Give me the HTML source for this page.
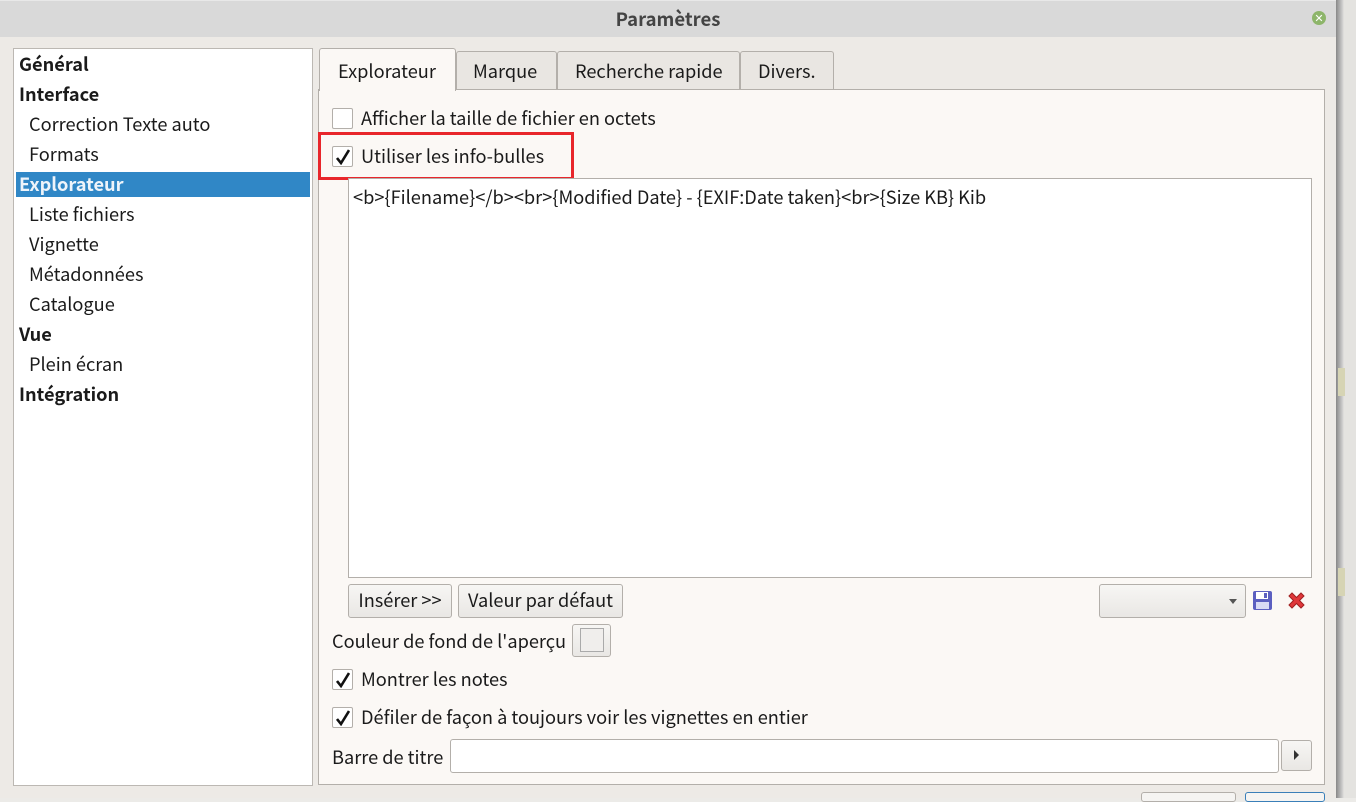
<!DOCTYPE html>
<html><head><meta charset="utf-8"><style>
*{box-sizing:border-box;margin:0;padding:0}
body{width:1356px;height:798px;overflow:hidden;background:#ecebe8;font-family:"Noto Sans CJK JP","DejaVu Sans",sans-serif;font-size:18.2px;color:#1a1a1a;position:relative}
.abs{position:absolute}
.t{position:absolute;white-space:nowrap;line-height:20px}
.cb{position:absolute;width:21px;height:21px;border:1px solid #b3afaa;background:#fff;border-radius:2px}
.cb svg{position:absolute;left:3px;top:2px}
.btn{position:absolute;border:1px solid #b3afaa;border-radius:3px;background:linear-gradient(#f7f6f4,#e9e7e4);text-align:center;line-height:30px}
</style></head><body>
<div class="abs" style="left:1336px;top:0;width:20px;height:798px;background:linear-gradient(90deg,#888,#c8c8c8 6px,#e4e3e0 8px)"></div>
<div class="abs" style="left:1338px;top:368px;width:7px;height:28px;background:#d6d4b4"></div>
<div class="abs" style="left:1338px;top:568px;width:7px;height:28px;background:#d6d4b4"></div>
<div class="abs" style="left:0;top:0;width:1336px;height:798px;background:#edeae6"></div>
<div class="abs" style="left:0;top:0;width:1336px;height:37px;background:#d9d9d9;border-top:1px solid #e8e8e8"></div>
<div class="t" style="left:0;width:1336px;top:9px;text-align:center;font-weight:bold;color:#444;font-size:18.5px">Paramètres</div>
<div class="abs" style="left:1312px;top:11px;width:14px;height:14px;border-radius:50%;background:#8db56a;color:#fff;font-size:11px;line-height:14px;text-align:center;font-weight:bold">✕</div>
<div class="abs" style="left:13px;top:48px;width:300px;height:738px;background:#fff;border:1px solid #bcb8b3"></div>
<div class="abs" style="left:16px;top:172px;width:294px;height:25px;background:#3087c6"></div>
<div class="t" style="left:19px;top:54px;font-weight:bold">Général</div>
<div class="t" style="left:19px;top:84px;font-weight:bold">Interface</div>
<div class="t" style="left:29px;top:114px">Correction Texte auto</div>
<div class="t" style="left:29px;top:144px">Formats</div>
<div class="t" style="left:19px;top:174px;font-weight:bold;color:#eef4fa">Explorateur</div>
<div class="t" style="left:29px;top:204px">Liste fichiers</div>
<div class="t" style="left:29px;top:234px">Vignette</div>
<div class="t" style="left:29px;top:264px">Métadonnées</div>
<div class="t" style="left:29px;top:294px">Catalogue</div>
<div class="t" style="left:19px;top:324px;font-weight:bold">Vue</div>
<div class="t" style="left:29px;top:354px">Plein écran</div>
<div class="t" style="left:19px;top:384px;font-weight:bold">Intégration</div>
<div class="abs" style="left:318px;top:89px;width:1007px;height:696px;background:#fbf8f5;border:1px solid #b3afaa"></div>
<div class="abs" style="left:456px;top:51px;width:101px;height:38px;border:1px solid #b3afaa;border-bottom:none;background:#e9e6e2;border-radius:3px 3px 0 0"></div>
<div class="abs" style="left:557px;top:51px;width:183px;height:38px;border:1px solid #b3afaa;border-bottom:none;background:#e9e6e2;border-radius:3px 3px 0 0"></div>
<div class="abs" style="left:740px;top:51px;width:94px;height:38px;border:1px solid #b3afaa;border-bottom:none;background:#e9e6e2;border-radius:3px 3px 0 0"></div>
<div class="abs" style="left:319px;top:48px;width:137px;height:43px;border:1px solid #b3afaa;border-bottom:none;background:#fbf8f5;border-radius:3px 3px 0 0"></div>
<div class="t" style="left:338px;top:61px">Explorateur</div>
<div class="t" style="left:473px;top:61px">Marque</div>
<div class="t" style="left:575px;top:61px">Recherche rapide</div>
<div class="t" style="left:758px;top:61px">Divers.</div>
<div class="cb" style="left:332px;top:108px"></div>
<div class="t" style="left:361px;top:108px">Afficher la taille de fichier en octets</div>
<div class="abs" style="left:318px;top:132px;width:256px;height:48px;border:3px solid #e8262b"></div>
<div class="cb" style="left:332px;top:146px"><svg width="14" height="16" viewBox="0 0 14 16"><path d="M1 9L5 14L13 1" fill="none" stroke="#111" stroke-width="2.6"/></svg></div>
<div class="t" style="left:361px;top:146px">Utiliser les info-bulles</div>
<div class="abs" style="left:348px;top:178px;width:964px;height:400px;background:#fff;border:1px solid #b3afaa"></div>
<div class="t" style="left:353px;top:187px">&lt;b&gt;{Filename}&lt;/b&gt;&lt;br&gt;{Modified Date} - {EXIF:Date taken}&lt;br&gt;{Size KB} Kib</div>
<div class="btn" style="left:348px;top:584px;width:104px;height:34px">Insérer &gt;&gt;</div>
<div class="btn" style="left:458px;top:584px;width:165px;height:34px">Valeur par défaut</div>
<div class="btn" style="left:1099px;top:584px;width:147px;height:34px"></div>
<div class="abs" style="left:1229px;top:599px;border:4px solid transparent;border-top:5px solid #555"></div>
<svg class="abs" style="left:1252px;top:590px" width="21" height="21" viewBox="0 0 21 21"><rect x="1" y="1" width="19" height="19" rx="2" fill="#5b5fc0"/><rect x="4" y="2" width="12" height="7" fill="#fff"/><rect x="12" y="3" width="3" height="5" fill="#5b5fc0"/><rect x="4" y="12" width="13" height="7" fill="#d8daf4"/></svg>
<svg class="abs" style="left:1286px;top:590px" width="21" height="21" viewBox="0 0 21 21"><path d="M3 6L6 3L10.5 7.5L15 3L18 6L13.5 10.5L18 15L15 18L10.5 13.5L6 18L3 15L7.5 10.5Z" fill="#e0383b" stroke="#a02020" stroke-width="1"/></svg>
<div class="t" style="left:332px;top:631px">Couleur de fond de l'aperçu</div>
<div class="btn" style="left:572px;top:624px;width:39px;height:33px"></div>
<div class="abs" style="left:580px;top:628px;width:24px;height:24px;border:1px solid #aaa;background:#f0eeec"></div>
<div class="cb" style="left:332px;top:669px"><svg width="14" height="16" viewBox="0 0 14 16"><path d="M1 9L5 14L13 1" fill="none" stroke="#111" stroke-width="2.6"/></svg></div>
<div class="t" style="left:361px;top:669px">Montrer les notes</div>
<div class="cb" style="left:332px;top:707px"><svg width="14" height="16" viewBox="0 0 14 16"><path d="M1 9L5 14L13 1" fill="none" stroke="#111" stroke-width="2.6"/></svg></div>
<div class="t" style="left:361px;top:707px">Défiler de façon à toujours voir les vignettes en entier</div>
<div class="t" style="left:332px;top:747px">Barre de titre</div>
<div class="abs" style="left:450px;top:739px;width:829px;height:34px;background:#fff;border:1px solid #b3afaa;border-radius:3px"></div>
<div class="btn" style="left:1281px;top:740px;width:31px;height:31px"></div>
<div class="abs" style="left:1294px;top:750px;border:5px solid transparent;border-left:5px solid #333;border-right:none"></div>
<div class="abs" style="left:1141px;top:792px;width:95px;height:10px;border:1px solid #b3afaa;border-radius:3px;background:#f5f4f2"></div>
<div class="abs" style="left:1245px;top:792px;width:80px;height:10px;border:1px solid #3a7fb8;border-radius:3px;background:#f5f4f2"></div>
</body></html>
